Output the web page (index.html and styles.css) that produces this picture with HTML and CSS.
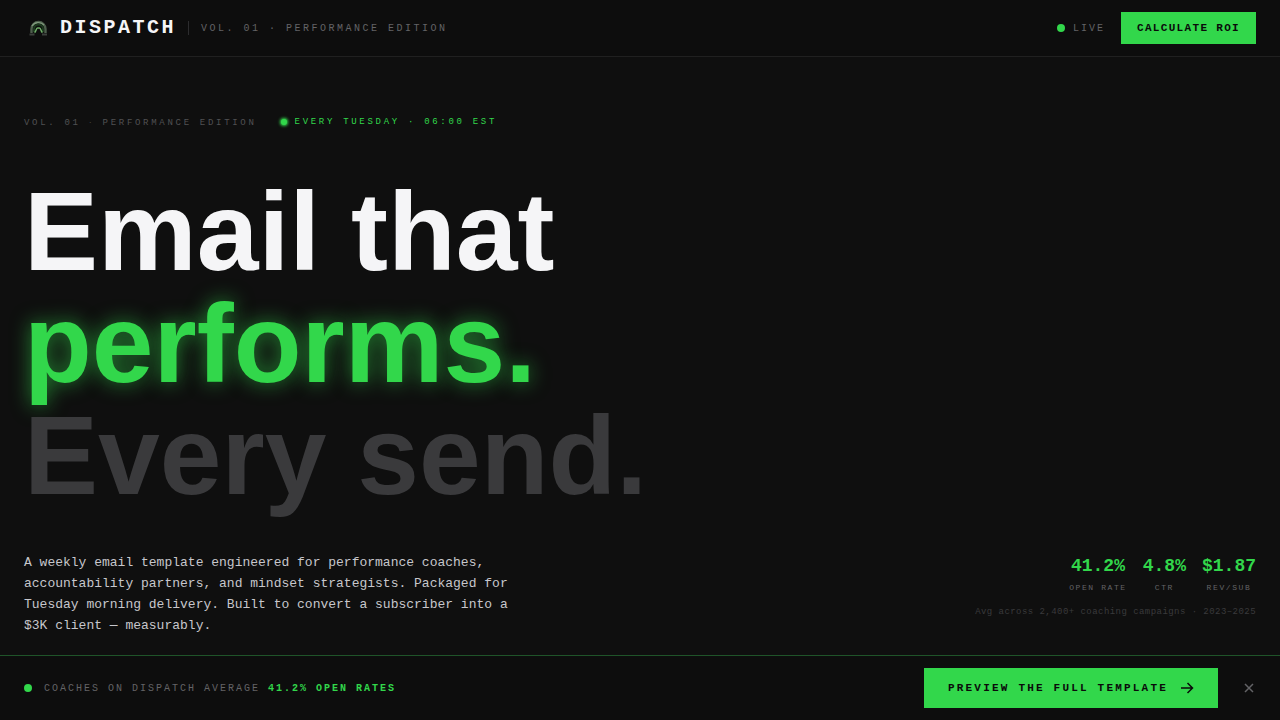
FILE: index.html
```html
<!DOCTYPE html>
<html lang="en">
<head>
  <meta charset="UTF-8" />
  <meta name="viewport" content="width=device-width, initial-scale=1.0"/>
  <title>Dispatch</title>
  <link rel="stylesheet" href="styles.css">
</head>

<body>
  <header class="nav">
    <div class="brand">
      <svg class="logo" viewBox="0 0 28 28" fill="none" aria-hidden="true">
        <path d="M7.5 19v-4a7 7 0 0 1 14 0v4" stroke="#4e5f4d" stroke-width="2.4"/>
        <path d="M8 12a7 6 0 0 1 12-1" stroke="#7f9a7c" stroke-width="1.2"/>
        <path d="M10 18v-3a4.5 4.5 0 0 1 9 0v3" stroke="#1c3a1e" stroke-width="2"/>
        <path d="M10.5 18.5c1.5-.5 1.5-4.5 3-4.5h2c1.5 0 1.5 4 3 4.5" stroke="#6fae68" stroke-width="1.5"/>
        <path d="M5.5 20.5h5M18 20.5h5" stroke="#3c403c" stroke-width="2"/>
      </svg>
      <span class="brand-name">DISPATCH</span>
      <span class="divider"></span>
      <span class="brand-edition">VOL. 01 · PERFORMANCE EDITION</span>
    </div>
    <div class="nav-right">
      <span class="live"><span class="dot"></span>LIVE</span>
      <button class="btn btn-small" type="button">CALCULATE ROI</button>
    </div>
  </header>

  <main class="hero">
    <div class="meta">
      <span class="meta-vol">VOL. 01 <span class="sep">·</span> PERFORMANCE EDITION</span>
      <span class="meta-time"><span class="dot dot-glow"></span>EVERY TUESDAY · 06:00 EST</span>
    </div>

    <h1 class="headline">
      <span class="line">Email that</span>
      <span class="line line-green">performs.</span>
      <span class="line line-dim">Every send.</span>
    </h1>

    <div class="hero-bottom">
      <p class="intro">A weekly email template engineered for performance coaches, accountability partners, and mindset strategists. Packaged for Tuesday morning delivery. Built to convert a subscriber into a $3K client — measurably.</p>

      <div class="results">
        <dl class="stats">
          <div class="stat"><dd>41.2%</dd><dt>OPEN RATE</dt></div>
          <div class="stat"><dd>4.8%</dd><dt>CTR</dt></div>
          <div class="stat"><dd>$1.87</dd><dt>REV/SUB</dt></div>
        </dl>
        <p class="note">Avg across 2,400+ coaching campaigns · 2023–2025</p>
      </div>
    </div>
  </main>

  <!-- sticky call to action -->
  <footer class="cta-bar">
    <p class="cta-text"><span class="dot"></span><span>COACHES ON DISPATCH AVERAGE <strong>41.2% OPEN RATES</strong></span></p>
    <div class="cta-actions">
      <button class="btn btn-large" type="button">
        PREVIEW THE FULL TEMPLATE
        <svg width="14" height="14" viewBox="0 0 14 14" fill="none" stroke="currentColor" stroke-width="1.5" aria-hidden="true">
          <path d="M1 7h11M7.5 2l5 5-5 5"/>
        </svg>
      </button>
      <button class="close" type="button" aria-label="Close">
        <svg width="14" height="14" viewBox="0 0 14 14" fill="none" stroke="currentColor" stroke-width="1.5" aria-hidden="true">
          <path d="M3 3l8 8M11 3l-8 8"/>
        </svg>
      </button>
    </div>
  </footer>
</body>
</html>
```

FILE: styles.css
```css
* {
  box-sizing: border-box;
  margin: 0;
  padding: 0;
}
body {
  min-height: 100vh;
  display: flex;
  flex-direction: column;
  background: #0f0f0f;
  color: #f5f5f7;
  font-family: "Liberation Mono", "Courier New", monospace;
}
.nav {
  height: 57px;
  padding: 0 24px;
  display: flex;
  align-items: center;
  justify-content: space-between;
  background: #0d0d0d;
  border-bottom: 1px solid #202020;
}
.brand {
  display: flex;
  align-items: center;
}
.logo {
  width: 28px;
  height: 28px;
  margin-right: 8px;
}
.brand-name {
  font-size: 20px;
  font-weight: bold;
  letter-spacing: 0.125em;
  line-height: 24px;
}
.divider {
  width: 1px;
  height: 14px;
  margin: 0 12px;
  background: #2c2c2e;
}
.brand-edition {
  color: #636366;
  font-size: 10px;
  letter-spacing: 0.25em;
}
.nav-right {
  display: flex;
  align-items: center;
  gap: 16px;
}
.live {
  display: flex;
  align-items: center;
  gap: 8px;
  color: #636366;
  font-size: 10px;
  letter-spacing: 0.2em;
}
.dot {
  flex: none;
  width: 8px;
  height: 8px;
  border-radius: 50%;
  background: #32d74b;
}
.dot-glow {
  width: 6px;
  height: 6px;
  box-shadow: 0 0 3px 1px #32d74b;
}
.btn {
  display: flex;
  align-items: center;
  border: none;
  background: #32d74b;
  color: #0a0a0a;
  font-family: inherit;
  font-size: 11px;
  font-weight: bold;
  cursor: pointer;
}
.btn-small {
  height: 32px;
  padding: 0 16px;
  letter-spacing: 0.12em;
}
.btn-large {
  height: 40px;
  padding: 0 24px;
  gap: 12px;
  letter-spacing: 0.2em;
}

.hero {
  flex: 1;
  padding: 56px 24px 19px;
}
.meta {
  height: 18px;
  display: flex;
  align-items: baseline;
  gap: 24px;
  margin-bottom: 45px;
  font-size: 9px;
  letter-spacing: 0.3em;
  line-height: 18px;
}
.meta-vol {
  color: #515153;
}
.sep {
  font-family: "Liberation Serif", serif;
}
.meta-time {
  display: flex;
  align-items: center;
  gap: 8px;
  color: #32d74b;
}
.headline {
  margin-bottom: 40px;
  font-family: "Liberation Sans", Arial, sans-serif;
  font-size: 111px;
  font-weight: bold;
  line-height: 112px;
}
.line {
  display: block;
}
.line-green {
  color: #32d74b;
  text-shadow: 0 0 20px rgba(50, 215, 75, 0.6);
}
.line-dim {
  color: #3a3a3c;
}
.hero-bottom {
  display: flex;
  justify-content: space-between;
  gap: 24px;
}
.intro {
  max-width: 500px;
  color: #c7c7cc;
  font-size: 13px;
  line-height: 21px;
}
.results {
  display: flex;
  flex-direction: column;
  align-items: flex-end;
}
.stats {
  display: flex;
  gap: 16px;
}
.stat {
  text-align: center;
}
.stat dd {
  color: #32d74b;
  font-size: 18px;
  font-weight: bold;
  line-height: 28px;
}
.stat dt {
  margin-top: 2px;
  color: #636366;
  font-size: 8px;
  letter-spacing: 0.2em;
  line-height: 12px;
}
.note {
  margin-top: 12px;
  color: #3a3a3c;
  font-size: 9px;
  letter-spacing: 0.05em;
  line-height: 12px;
}

.cta-bar {
  position: sticky;
  bottom: 0;
  height: 65px;
  padding: 0 24px;
  display: flex;
  align-items: center;
  justify-content: space-between;
  background: #0d0d0d;
  border-top: 1px solid #1f5429;
}
.cta-text {
  display: flex;
  align-items: center;
  gap: 12px;
  color: #636366;
  font-size: 10px;
  letter-spacing: 0.2em;
}
.cta-text strong {
  color: #32d74b;
}
.cta-actions {
  display: flex;
  align-items: center;
  gap: 24px;
}
.close {
  display: flex;
  border: none;
  background: none;
  color: #636366;
  cursor: pointer;
}
```
